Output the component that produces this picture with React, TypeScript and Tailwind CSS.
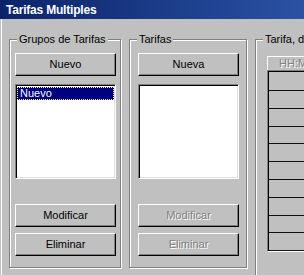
const font = "font-['Liberation_Sans','Arial',sans-serif]";

function Button({ label, disabled }: { label: string; disabled?: boolean }) {
  return (
    <div className="w-[101px] h-[23px] flex items-center justify-center bg-[#c0c0c0] border border-t-white border-l-white border-r-black border-b-black shadow-[inset_-1px_-1px_0_#808080]">
      <span
        className={
          disabled
            ? "text-[#808080] [text-shadow:1px_1px_0_#ffffff] leading-none"
            : "text-black leading-none"
        }
      >
        {label}
      </span>
    </div>
  );
}

function ListBox({ items }: { items: string[] }) {
  return (
    <div className="w-[101px] h-[95px] bg-white border border-t-[#808080] border-l-[#808080] border-r-white border-b-white shadow-[inset_1px_1px_0_#000,inset_-1px_-1px_0_#dfdfdf] p-[1px] pt-[2px] pl-[1px]">
      {items.map((it) => (
        <div
          key={it}
          className="h-[13px] bg-[#000080] text-white border border-dotted border-[#ffff80] leading-[11px] pl-[2px]"
        >
          {it}
        </div>
      ))}
    </div>
  );
}

function Group({
  title,
  className,
  children,
}: {
  title: string;
  className: string;
  children?: React.ReactNode;
}) {
  return (
    <div
      className={
        "relative shrink-0 border border-[#808080] shadow-[inset_1px_1px_0_#ffffff,1px_1px_0_#ffffff] " +
        className
      }
    >
      <span className="absolute left-[7px] top-[-8px] px-[2px] bg-[#c0c0c0] leading-[14px] whitespace-nowrap">
        {title}
      </span>
      {children}
    </div>
  );
}

// posiciones de las líneas de fila en la rejilla de tarifas
const rowHeights = [20, 18, 18, 17, 18, 18, 18, 18, 17, 18];

export default function App() {
  return (
    <div className={`w-[304px] h-[275px] overflow-hidden bg-[#c0c0c0] text-[11px] text-black ${font}`}>
      {/* Barra de título */}
      <div className="h-[19px] bg-gradient-to-r from-[#0a246a] to-[#2b52a4] flex items-center pl-[6px]">
        <span className="text-white font-bold text-[12px] leading-none tracking-[-0.2px]">
          Tarifas Multiples
        </span>
      </div>

      <div className="ml-[1px] h-[256px] border-l border-white flex gap-2 pl-[7px] pt-[20px]">
        <Group title="Grupos de Tarifas" className="w-[112px] h-[229px]">
          <div className="flex flex-col pl-[5px] pt-[13px]">
            <Button label="Nuevo" />
            <div className="mt-[8px]">
              <ListBox items={["Nuevo"]} />
            </div>
            <div className="mt-[25px]">
              <Button label="Modificar" />
            </div>
            <div className="mt-[6px]">
              <Button label="Eliminar" />
            </div>
          </div>
        </Group>

        <Group title="Tarifas" className="w-[118px] h-[229px]">
          <div className="flex flex-col pl-[8px] pt-[13px]">
            <Button label="Nueva" />
            <div className="mt-[8px]">
              <ListBox items={[]} />
            </div>
            <div className="mt-[25px]">
              <Button label="Modificar" disabled />
            </div>
            <div className="mt-[6px]">
              <Button label="Eliminar" disabled />
            </div>
          </div>
        </Group>

        <Group title="Tarifa, del grupo" className="w-[120px] h-[260px]">
          <div className="flex flex-col pl-[11px] pt-[16px]">
            <div className="h-[14px] w-[80px] border-t border-l border-white flex items-center pl-[11px]">
              <span className="text-[#808080] [text-shadow:1px_1px_0_#ffffff] leading-none">HH:MM</span>
            </div>
            <div className="w-[80px] border-t border-l border-[#808080] border-b border-b-white shadow-[inset_1px_1px_0_#000,inset_0_-1px_0_#dfdfdf]">
              {rowHeights.map((h, i) => (
                <div
                  key={i}
                  className="ml-[1px] border-b border-[#101010]"
                  style={{ height: h }}
                />
              ))}
            </div>
          </div>
        </Group>
      </div>
    </div>
  );
}
